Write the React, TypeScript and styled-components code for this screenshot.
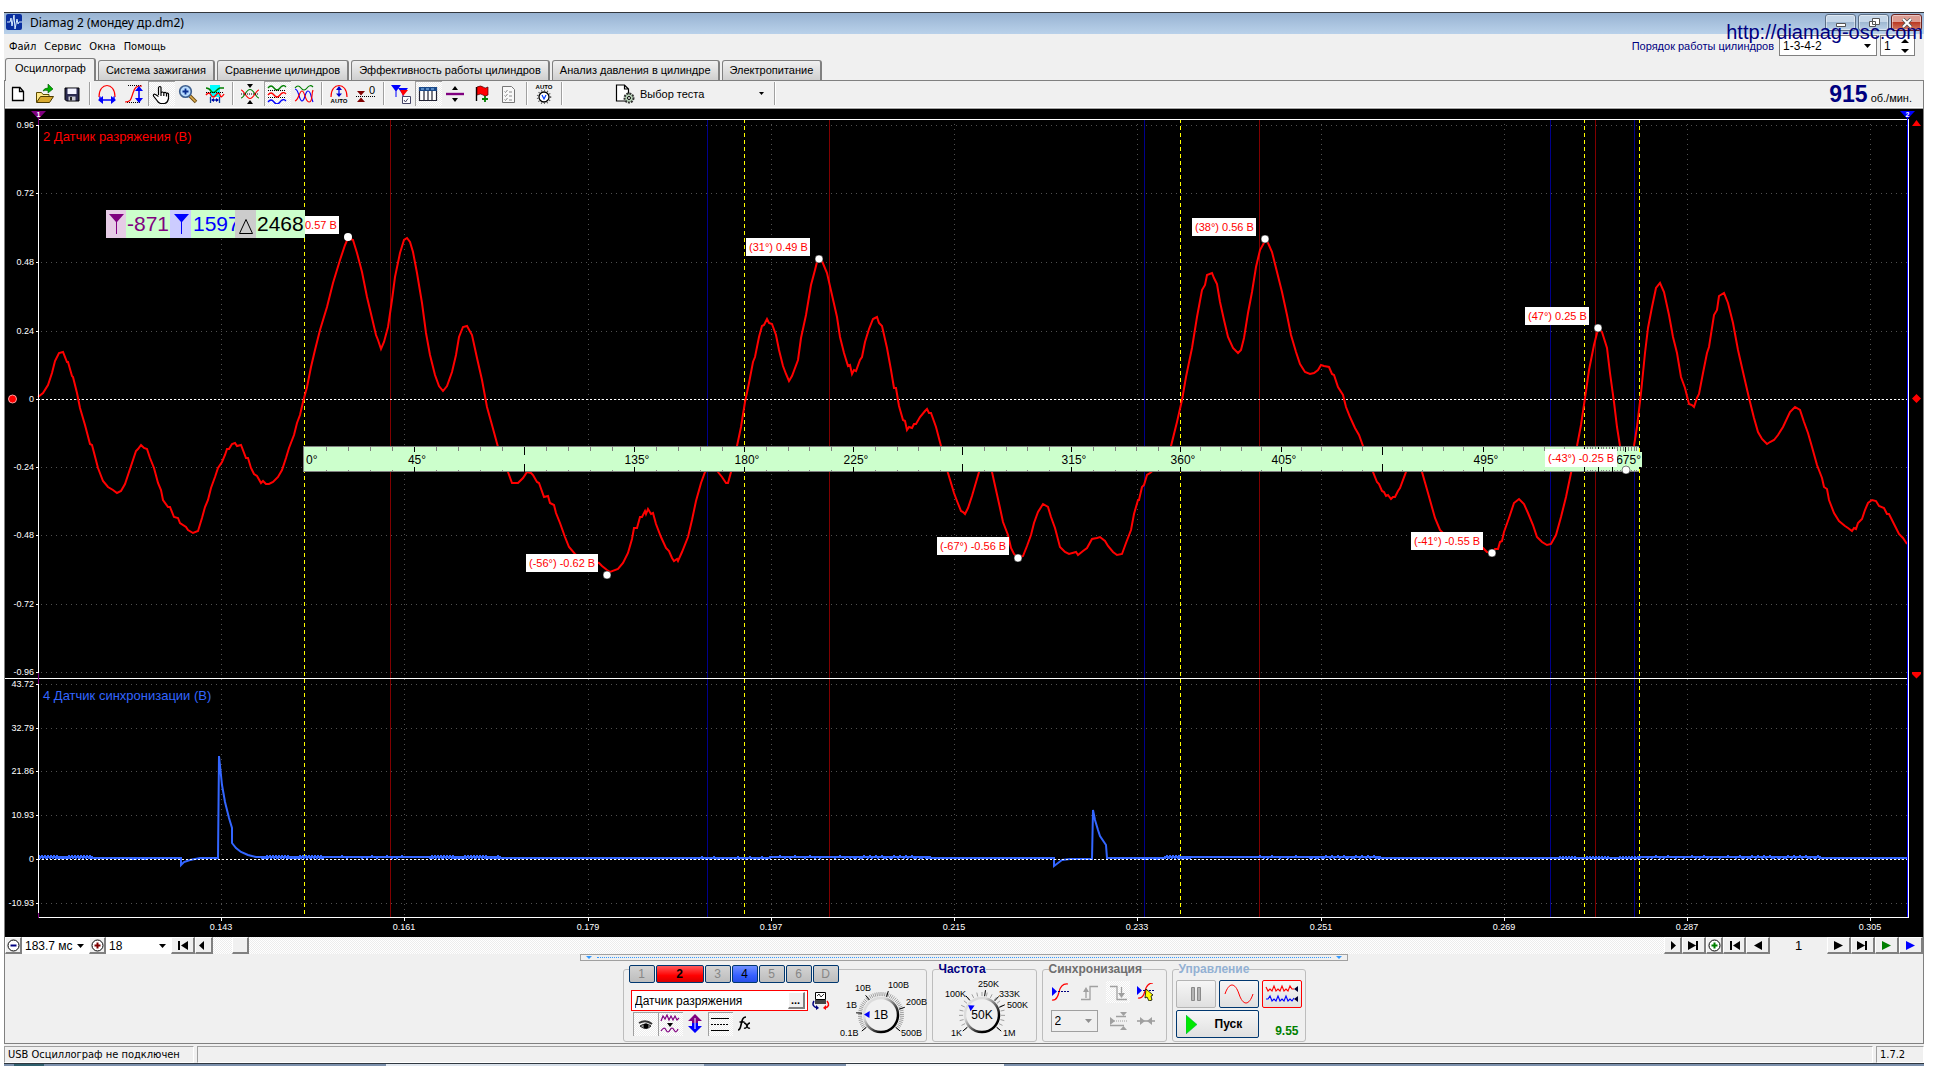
import React from "react";
import styled, { createGlobalStyle, css } from "styled-components";

const FACE = "#f0f0f0";
const UI = `"Liberation Sans", Arial, sans-serif`;
const TAHOMA = `"DejaVu Sans Condensed", Tahoma, sans-serif`;

const Global = createGlobalStyle`
  *, *::before, *::after { box-sizing: border-box; }
  body { margin: 0; background: #fff; color: #000; font: 11px/14px ${UI}; }
  button, input, select { font: inherit; color: inherit; margin: 0; padding: 0; border: 0; border-radius: 0; background: none; }
  svg { display: block; flex: none; }
`;

/* ---------- window frame ---------- */

const Desktop = styled.div`
  padding: 12px 12px 0 4px;
`;

const Window = styled.div`
  position: relative;
  display: flex;
  flex-direction: column;
  background: ${FACE};
`;

const TitleBar = styled.header`
  display: flex;
  align-items: flex-start;
  gap: 8px;
  height: 22px;
  padding: 1px 2px;
  border-top: 1px solid #33373d;
  background: linear-gradient(#98b3d2, #b9d1ea);
`;

const Title = styled.h1`
  flex: 1;
  margin: 0;
  font: 12px/18px "Noto Sans", "Open Sans", sans-serif;
`;

const WindowButtons = styled.div`
  display: flex;
  gap: 2px;
`;

const WindowButton = styled.button<{ $close?: boolean }>`
  display: grid;
  place-items: center;
  width: 31px;
  height: 17px;
  border: 1px solid #5c6f86;
  border-radius: 3px;
  box-shadow: inset 0 0 0 1px rgba(255, 255, 255, 0.45);
  background: linear-gradient(#c5d6e8 45%, #9fb8d2 50%, #bcd2e8);
  ${(p) => p.$close && css`border-color: #6b2320; background: linear-gradient(#dd9c92 45%, #bb3a24 50%, #d27a64);`}
`;

const SiteLink = styled.a`
  position: absolute;
  top: 8px;
  right: 1px;
  z-index: 2;
  color: #00007f;
  font-size: 20px;
  line-height: 24px;
  text-decoration: none;
`;

const MenuBar = styled.nav`
  display: flex;
  align-items: flex-start;
  gap: 8px;
  height: 24px;
  padding: 0 9px 0 5px;
`;

const MenuItem = styled.button`
  margin-top: 6px;
  font: 11px/14px ${TAHOMA};
`;

const FiringOrder = styled.div`
  display: flex;
  gap: 3px;
  margin: 1px 0 0 auto;
  height: 21px;

  label {
    padding: 4px 2px 0 0;
    color: #00007f;
  }
`;

/* ---------- shared controls ---------- */

const Field = styled.span<{ $w: number; $line?: string }>`
  display: grid;
  width: ${(p) => p.$w}px;
  background: #fff;
  border: ${(p) => (p.$line ? `1px solid ${p.$line}` : "0")};

  > * { grid-area: 1 / 1; }
  > svg { justify-self: end; align-self: center; margin-right: 5px; pointer-events: none; }

  select, input {
    width: 100%;
    height: 100%;
    padding: 0 3px;
    appearance: none;
    outline: 0;
    font-size: 12px;
  }
  input::-webkit-inner-spin-button { appearance: none; }
`;

const dither = css`
  background: repeating-conic-gradient(#fff 0 25%, #ececec 0 50%) 0 0 / 2px 2px;
`;

/* ---------- tabs and tool bar ---------- */

const Tabs = styled.div`
  display: flex;
  align-items: flex-end;
  gap: 2px;
  height: 23px;
  padding-left: 1px;
  border-bottom: 1px solid #808080;
`;

const Tab = styled.button<{ $on?: boolean }>`
  height: 20px;
  padding: 0 7px 1px;
  border: 1px solid #808080;
  border-width: 1px 2px 0 1px;
  border-radius: 3px 3px 0 0;
  background: linear-gradient(#f0f0f0, #cfcfcf);
  white-space: nowrap;
  ${(p) => p.$on && css`height: 23px; padding: 0 8px 4px 9px; margin-bottom: -1px; background: ${FACE};`}
`;

const Frame = styled.div`
  border: 1px solid #808080;
  border-top: 0;
`;

const ToolBar = styled.div`
  display: flex;
  align-items: center;
  height: 28px;
  padding-bottom: 2px;
  border-bottom: 1px solid #a0a0a0;
  box-shadow: inset 0 -1px #fff;
`;

const Tool = styled.button<{ $down?: boolean }>`
  display: grid;
  place-items: center;
  width: 27px;
  height: 25px;
  ${(p) => p.$down && css`${dither} box-shadow: inset 1px 1px #a0a0a0;`}
`;

const ToolBarTool = styled(Tool)`
  padding-right: 2px;
`;

const Rule = styled.span`
  width: 8px;
  height: 23px;
  background: linear-gradient(90deg, transparent 3px, #a0a0a0 3px 4px, #fff 4px 5px, transparent 5px);
`;

const TestPicker = styled.button`
  display: flex;
  align-items: center;
  gap: 5px;
  width: 149px;
  margin: 0 7px 0 49px;
  text-align: left;

  span { flex: 1; }
`;

const Rpm = styled.output`
  display: flex;
  align-items: baseline;
  gap: 3px;
  margin-left: auto;
  padding-right: 11px;

  strong { color: #00007f; font-size: 23px; line-height: 24px; }
`;

/* ---------- navigation strip below the chart ---------- */

const NavStrip = styled.div`
  display: flex;
  height: 17px;
`;

const NavButton = styled.button<{ $w: number }>`
  display: grid;
  place-items: center;
  width: ${(p) => p.$w}px;
  border: 1px solid #fff;
  border-right: 2px solid #808080;
  border-bottom: 2px solid #808080;
  background: ${FACE};
`;

const Track = styled.div`
  flex: 1;
  display: flex;
  padding-left: 19px;
  ${dither}
`;

const PageNo = styled.output`
  width: 57px;
  text-align: center;
  font-size: 13px;
  line-height: 17px;
`;

/* ---------- lower control panel ---------- */

const Panel = styled.section`
  display: flex;
  flex-direction: column;
  align-items: center;
  height: 89px;
`;

const Splitter = styled.div`
  display: flex;
  align-items: center;
  gap: 5px;
  width: 40%;
  height: 7px;
  padding: 0 5px;
  border: 1px solid #a0a0a0;

  i { flex: 1; border-top: 1px dotted #3399ff; }
`;

const Groups = styled.div`
  display: flex;
  gap: 5px;
  padding-top: 8px;
`;

const Group = styled.div<{ $w: number }>`
  width: ${(p) => p.$w}px;
  height: 73px;
  padding: 0 3px;
  border: 1px solid #bdbdbd;
  border-radius: 3px;
`;

const GroupTitle = styled.h2<{ $color: string }>`
  width: max-content;
  margin: -7px 0 4px 3px;
  background: ${FACE};
  color: ${(p) => p.$color};
  font: bold 12px/13px ${UI};
`;

const ChannelGroup = styled(Group)`
  display: flex;
  justify-content: space-between;
  padding: 0 0 0 5px;
`;

const Channels = styled.div`
  display: flex;
  gap: 1px;
  margin-top: -5px;
  background: ${FACE};
`;

const Channel = styled.button<{ $tone?: "red" | "blue" }>`
  width: ${(p) => (p.$tone === "red" ? 48 : 26)}px;
  height: 18px;
  border: 1px solid #00376f;
  border-radius: 2px;
  color: ${(p) => (p.$tone ? "#000" : "#868686")};
  font-size: 12px;
  font-weight: ${(p) => (p.$tone === "red" ? "bold" : "normal")};
  line-height: 16px;
  background: ${(p) =>
    p.$tone === "red"
      ? "linear-gradient(#ff5a5a, #f00 60%, #d80000)"
      : p.$tone === "blue"
      ? "linear-gradient(#6f8fff, #3560ff 60%, #2850e8)"
      : "linear-gradient(#d4d4d4, #bdbdbd)"};
`;

const SensorRow = styled.div`
  display: flex;
  align-items: center;
  gap: 4px;
  margin: 7px 0 1px 2px;
`;

const SensorBox = styled.div`
  display: flex;
  align-items: center;
  width: 177px;
  height: 21px;
  padding: 1px 2px;
  border: 1px solid #f00;
  background: #fff;

  input { flex: 1; min-width: 0; padding-left: 1px; font-size: 12px; outline: 0; }
`;

const More = styled.button`
  width: 17px;
  height: 17px;
  border: 1px solid #fff;
  border-right: 2px solid #808080;
  border-bottom: 2px solid #808080;
  background: ${FACE};
  font-weight: bold;
  line-height: 8px;
`;

const Modes = styled.div`
  display: flex;
  margin-left: 4px;
`;

const Mode = styled(Tool)`
  width: 25px;
  height: 24px;
`;

const KnobBox = styled.div`
  position: relative;

  input {
    position: absolute;
    inset: 0;
    width: 100%;
    height: 100%;
    opacity: 0;
  }
  text { font: 9px ${UI}; }
  .value { font-size: 12px; }
`;

const FrequencyKnob = styled.div`
  margin: -10px -3px 0;
`;

const SyncGrid = styled.div`
  display: grid;
  grid-template-columns: 28px 30px 28px 28px;
  grid-template-rows: 24px 34px;
  align-items: center;
  justify-items: center;

  > span { grid-column: span 2; justify-self: start; height: 22px; margin-left: 5px; background: ${FACE}; }
`;

const SyncTool = styled(Tool)`
  width: 24px;
  height: 22px;
  ${(p) => p.$down && css`box-shadow: none;`}
`;

const RunGrid = styled.div`
  display: grid;
  grid-template-columns: repeat(3, 40px);
  grid-auto-rows: 28px;
  gap: 2px 3px;
`;

const RunButton = styled.button<{ $line: string; $wide?: boolean }>`
  display: flex;
  align-items: center;
  justify-content: center;
  grid-column: span ${(p) => (p.$wide ? 2 : 1)};
  border: 1px solid ${(p) => p.$line};
  border-radius: 2px;
  background: linear-gradient(#f6f6f6, #e0e0e0);
  font: bold 12px/14px ${UI};
  ${(p) => p.$wide && css`justify-content: flex-start; gap: 18px; padding-left: 9px;`}
`;

const Ratio = styled.output`
  align-self: end;
  justify-self: end;
  padding-right: 3px;
  color: #007f00;
  font: bold 12px/13px ${UI};
`;

/* ---------- status bar ---------- */

const StatusBar = styled.footer`
  display: flex;
  gap: 3px;
  height: 20px;
  padding-top: 2px;
  border-bottom: 1px solid #303840;
  font: 11px/15px ${TAHOMA};
`;

const StatusCell = styled.span<{ $w?: number }>`
  ${(p) => (p.$w ? `width: ${p.$w}px;` : "flex: 1;")}
  padding-left: 3px;
  border: 1px solid;
  border-color: #a0a0a0 #fff #fff #a0a0a0;
  white-space: nowrap;
`;

const TaskBar = styled.div`
  display: flex;
  height: 3px;
  background: #7b90ac;
`;

const Task = styled.i<{ $w: number; $bg?: string }>`
  width: ${(p) => p.$w}px;
  background: ${(p) => p.$bg ?? "transparent"};
`;

/* ---------- icons ---------- */

const Pic = ({ children, w = 20, h = 20 }: { children: React.ReactNode; w?: number; h?: number }) => (
  <svg width={w} height={h} viewBox={`0 0 ${w} ${h}`} fill="none" aria-hidden="true">
    {children}
  </svg>
);

const Down = () => <Pic w={7} h={4}><path d="M0 0h7L3.500 4z" fill="#000" /></Pic>;

const toolIcons: Record<string, React.ReactNode> = {
  new: <path d="M4 3.500h8l3.500 4v9H4.500v-13M11.500 3.500v4h4" fill="#fff" stroke="#000" strokeWidth="1.300" />,
  open: (
    <>
      <path d="M1.500 18V8.500h5l1.500 2h6V13" fill="#ffe98a" stroke="#5d4a00" />
      <path d="M1.500 18.500l4-6h13l-4 6z" fill="#d9a92e" stroke="#4d3c00" />
      <path d="M8 7q1-3 5-3V0l5 5-5 4V6.500q-3-.5-5 .5" fill="#00b000" stroke="#005000" strokeWidth=".6" />
    </>
  ),
  save: (
    <>
      <path d="M3 4h14v13H4.500L3 15.500z" fill="#2b2b52" stroke="#000" />
      <path d="M5.500 4.500h9v5.500h-9z" fill="#f4f4ff" />
      <path d="M6.500 12.500h7v4h-7z" fill="#c8c8d0" />
      <path d="M8 13h2v3.500H8z" fill="#222" />
    </>
  ),
  fitX: (
    <>
      <path d="M2 13C2 5 6 1.500 10 1.500S18 5 18 13" stroke="#f00" strokeWidth="1.200" />
      <path d="M3 12.500v4M17 12.500v4M5 16h10" stroke="#00f" strokeWidth="1.400" />
      <path d="M1 16l5-4v8zM19 16l-5-4v8z" fill="#00f" />
    </>
  ),
  fitY: (
    <>
      <path d="M4 1.500h13M3 18.500h13" stroke="#000" strokeDasharray="1 1" />
      <path d="M1 18c6 0 6-3 8-9s3-7 9-7" stroke="#f00" strokeWidth="1.200" />
      <path d="M15 5v11" stroke="#00f" strokeWidth="1.600" />
      <path d="M15 2l4 5h-8zM15 19l4-5h-8z" fill="#00f" />
    </>
  ),
  hand: (
    <path
      d="M7.500 11V3.500q1.500-2 2.500 0V9q1.500-2 2.800 0 1.500-1.500 2.700.5 1.500-1 2 .5v4.500q-1 4.500-4 5H9.500q-2.500-1-3.500-3L2.500 12q-.5-2.500 2-1.500l3 2M10 9v3M12.800 9.500V12M15.500 10v2.500"
      fill="#fff" stroke="#000" strokeWidth="1.200"
    />
  ),
  zoom: (
    <>
      <path d="M11 11l7 7" stroke="#6b4a10" strokeWidth="3.600" />
      <path d="M11.500 11.500l6 6" stroke="#e0b050" strokeWidth="1.600" />
      <circle cx="7.500" cy="7.500" r="5.800" fill="#b8dcff" stroke="#3d5f8e" strokeWidth="1.600" />
      <path d="M7.500 4.500v6M4.500 7.500h6" stroke="#0a2f8f" strokeWidth="1.800" />
    </>
  ),
  region: (
    <>
      <path d="M5 1h10v12H5z" fill="#0ff" />
      <path d="M1 4q3 0 5 3t5 0 4-3 4 0" stroke="#007f00" strokeWidth="1.400" />
      <path d="M1 11q3-4 5 0t5 0 4 0 4-1" stroke="#f00" strokeWidth="1.400" />
      <path d="M1 8.500h18" stroke="#000" strokeDasharray="1 1" />
      <path d="M5.500 13v6M14.500 13v6M7 16h6" stroke="#003c9f" strokeWidth="1.300" />
      <path d="M6 16l3-2v4zM14 16l-3-2v4z" fill="#00a" />
    </>
  ),
  squeeze: (
    <>
      <path d="M1 14C4 14 6 5.500 10 5.500S16 14 19 14" stroke="#007f00" strokeWidth="1.200" />
      <path d="M1 6C4 6 6 14.500 10 14.500S16 6 19 6" stroke="#f00" strokeWidth="1.200" />
      <path d="M1 10h18" stroke="#000" strokeDasharray="1 1" />
      <path d="M7 0h6l-3 4zM7 20h6l-3-4z" fill="#000" />
    </>
  ),
  stacked: (
    <>
      <path d="M1 4q3-4 6 0t6 0 6-1" stroke="#007f00" strokeWidth="1.300" />
      <path d="M1 6.500h18M1 13.500h18" stroke="#000" strokeDasharray="1 1" />
      <path d="M1 11q3-4 6 0t6 0 6-1" stroke="#f00" strokeWidth="1.300" />
      <path d="M1 18q3-4 6 0t6 0 6-1" stroke="#00f" strokeWidth="1.300" />
    </>
  ),
  overlay: (
    <>
      <path d="M1 4q3-4 6 0t6 0 6-1" stroke="#007f00" strokeWidth="1.200" />
      <path d="M1 5c4 0 4 12 7 12s3-10 6-10 3 7 5 11" stroke="#00f" strokeWidth="1.200" />
      <path d="M1 17c4-1 4-10 7-10s3 11 7 11 2-7 4-12" stroke="#f00" strokeWidth="1.200" />
    </>
  ),
  autoFit: (
    <>
      <path d="M2 13C2 5 6 1.500 10 1.500S18 5 18 13" stroke="#f00" strokeWidth="1.200" />
      <path d="M10 4v8" stroke="#00f" strokeWidth="1.300" />
      <path d="M10 2l3 4H7zM10 13l3-3.500H7z" fill="#00c" />
      <text x="10" y="19" textAnchor="middle" fontSize="6" fontWeight="bold" fill="#000">AUTO</text>
    </>
  ),
  zero: (
    <>
      <path d="M1 7h8l-4 4.500zM1 18h8l-4-4.500z" fill="#7f0000" />
      <path d="M0 12.500h20" stroke="#000" strokeDasharray="1 1" />
      <text x="13" y="10" fontSize="11" fill="#000">0</text>
    </>
  ),
  cursors: (
    <>
      <path d="M0 1h10L5.500 7v6h-1V7z" fill="#00f" />
      <path d="M7 4h10l-4.500 6v5h-1v-5z" fill="#00f" />
      <path d="M9 6h8l-5 6z" fill="#f00" />
      <path d="M11.500 12.500h8v7h-8z" fill="#fff" stroke="#446" />
      <path d="M13 16l1.500 2L17 14.500" stroke="#446" />
    </>
  ),
  table: (
    <>
      <path d="M1.500 3.500h17v13h-17z" fill="#fff" stroke="#223" strokeWidth="1.200" />
      <path d="M1 3h18v4H1z" fill="#1b4a8a" />
      <path d="M6 7v9M10 7v9M14 7v9" stroke="#223" strokeWidth="1.200" />
      <path d="M3 5h3M8 5h3M13 5h3" stroke="#9cf" />
    </>
  ),
  divider: (
    <>
      <path d="M1 10h18" stroke="#800080" strokeWidth="2.400" />
      <path d="M7 6h6l-3-4zM7 14h6l-3 4z" fill="#000" />
    </>
  ),
  flag: (
    <>
      <path d="M4.500 3v14" stroke="#000" strokeWidth="1.400" />
      <path d="M5 3q4-2 6 0t5 0v8q-3 2-5 0t-6 0z" fill="#f00" stroke="#400" strokeWidth=".7" />
      <path d="M13 12v6M10 15h6" stroke="#007f00" strokeWidth="1.800" />
    </>
  ),
  checklist: (
    <>
      <path d="M3.500 2.500h9l3 3v13h-12z" fill="#f8f8f8" stroke="#777" />
      <path d="M5.500 7.500l1 1 2-2.500M5.500 11.500l1 1 2-2.500M5.500 15.500l1 1 2-2.500M10 8h3M10 12h3M10 16h3" stroke="#8a8a8a" />
    </>
  ),
  autoV: (
    <>
      <text x="10" y="5" textAnchor="middle" fontSize="6" fontWeight="bold" fill="#000">AUTO</text>
      <circle cx="10" cy="13" r="6.500" stroke="#555" strokeWidth="1.500" strokeDasharray="1 2" />
      <circle cx="10" cy="13" r="5" fill="#fff" stroke="#000" strokeWidth="1.300" />
      <path d="M8 11l2 4 2-4" stroke="#003cff" strokeWidth="1.200" />
    </>
  ),
};

const navShapes = {
  prev: "M7 2v9L2 6.500z",
  next: "M5 2v9l5-4.500z",
  left: "M11 2v9L3 6.500z",
  right: "M2 2v9l9-4.500z",
  first: "M2 2h2v9H2zM12 2v9L5 6.500z",
  last: "M1 2v9l8-4.500zM9 2h2v9H9z",
};

const Nav = ({ shape, w, label, color = "#000" }: { shape: keyof typeof navShapes; w: number; label: string; color?: string }) => (
  <NavButton $w={w} aria-label={label}>
    <Pic w={13} h={13}><path d={navShapes[shape]} fill={color} /></Pic>
  </NavButton>
);

const ScaleButton = ({ color, plus, label }: { color: string; plus?: boolean; label: string }) => (
  <NavButton $w={17} aria-label={label}>
    <Pic w={13} h={13}>
      <circle cx="6.500" cy="6.500" r="5.500" fill="#fff" stroke="#000" />
      <path d={plus ? "M6.500 3.500v6M3.500 6.500h6" : "M3.500 6.500h6"} stroke={color} strokeWidth="2" />
    </Pic>
  </NavButton>
);

/* ---------- oscillogram ---------- */

const vacuum =
  "38,397 43,393 48,385 52,373 55,361 59,353 63,352 67,362 68,362 72,376 73,377 77,393 80,408 85,425 90,444 92,445 98,468 103,481 108,487 113,490 117,493 121,491 125,484 129,472 133,460 136,451 138,449 141,445 144,448 147,449 150,458 154,468 158,483 161,490 163,500 168,507 170,507 174,517 178,518 180,523 186,527 188,530 193,533 198,531 202,518 205,507 208,500 211,488 215,477 218,468 222,462 225,455 227,449 229,449 232,444 235,443 237,446 241,445 246,458 248,458 251,468 254,474 257,476 261,483 263,481 266,484 269,484 273,482 278,477 282,470 286,458 289,448 294,435 297,423 300,415 303,402 307,387 311,367 315,350 320,330 327,307 333,283 340,260 345,245 348,238 353,240 357,253 362,272 367,297 372,318 376,335 378,340 381,349 384,342 388,327 392,300 395,277 400,253 404,240 407,238 410,242 413,252 417,273 422,303 426,333 430,355 435,375 439,386 443,391 447,386 452,372 456,355 459,337 463,327 467,326 472,335 477,358 482,380 487,407 492,425 498,447 508,472 512,483 518,483 523,478 527,472 531,473 533,475 537,482 539,483 544,497 548,496 550,503 554,505 556,513 560,523 565,537 569,547 575,554 585,560 599,563 602,566 607,570 610,572 618,569 623,563 628,553 632,539 634,528 637,528 640,517 642,517 645,511 646,514 648,509 651,514 653,513 656,524 661,537 666,548 669,551 672,558 674,561 677,559 678,561 682,552 688,537 692,520 696,501 701,483 705,472 712,464 718,472 722,477 726,483 728,483 731,472 737,446 741,427 745,402 749,383 753,362 755,357 759,337 762,326 764,325 767,319 769,323 772,324 776,335 779,350 783,366 786,374 789,381 792,376 798,360 801,338 806,315 811,285 815,270 817,262 819,259 822,261 827,273 832,295 837,317 840,337 844,353 848,366 850,365 852,374 854,370 856,371 860,360 862,357 865,342 869,329 873,319 875,318 877,317 879,323 882,326 887,348 891,370 894,388 896,388 899,406 903,420 905,421 907,430 909,427 912,428 914,424 916,424 920,417 925,411 927,409 929,413 931,413 936,427 941,446 948,473 954,493 957,501 961,511 963,512 965,514 968,508 972,496 979,472 985,458 992,472 996,490 1000,508 1003,522 1008,535 1011,548 1014,554 1018,558 1023,556 1027,546 1031,535 1034,523 1038,512 1043,504 1048,507 1051,517 1055,528 1060,547 1065,552 1069,554 1076,552 1078,555 1083,551 1087,548 1092,539 1097,538 1100,537 1105,541 1108,546 1113,552 1117,555 1122,554 1126,543 1131,530 1134,514 1138,500 1139,500 1142,487 1144,485 1147,475 1150,473 1160,465 1171,446 1177,422 1182,400 1186,377 1192,348 1197,317 1202,290 1205,285 1207,275 1212,273 1214,278 1217,284 1220,302 1224,320 1228,337 1233,348 1238,353 1241,350 1244,338 1248,313 1252,292 1256,267 1260,250 1265,241 1268,243 1272,252 1277,272 1282,292 1287,315 1291,335 1296,352 1300,364 1305,372 1310,374 1314,373 1318,370 1321,365 1324,366 1329,367 1332,374 1334,375 1338,387 1343,395 1346,407 1350,417 1355,428 1359,435 1363,446 1373,472 1377,482 1379,484 1382,491 1384,492 1386,496 1388,495 1391,499 1393,497 1395,497 1398,491 1400,488 1406,472 1414,460 1422,472 1428,493 1435,518 1440,530 1450,540 1483,548 1487,552 1492,553 1495,549 1498,549 1500,542 1502,541 1504,532 1509,518 1514,503 1519,499 1524,504 1528,513 1533,525 1537,537 1542,542 1547,545 1551,544 1556,535 1561,517 1566,497 1571,473 1577,446 1581,425 1585,398 1589,370 1594,345 1597,333 1599,329 1602,332 1607,348 1610,373 1614,402 1617,427 1620,446 1626,470 1634,446 1637,427 1641,393 1645,353 1648,328 1652,307 1656,288 1660,283 1664,292 1669,315 1673,337 1677,353 1681,377 1685,388 1689,404 1692,405 1694,407 1697,398 1699,394 1703,373 1707,353 1709,347 1714,315 1717,310 1719,296 1724,293 1728,303 1733,323 1738,350 1743,372 1749,398 1754,418 1758,432 1762,439 1767,444 1770,442 1774,440 1778,435 1783,427 1790,412 1795,407 1800,410 1804,422 1808,433 1812,447 1817,465 1822,478 1824,487 1827,489 1829,500 1834,513 1839,521 1845,526 1848,528 1852,531 1854,528 1856,529 1858,523 1862,519 1865,510 1868,503 1872,500 1876,501 1879,506 1884,508 1887,514 1889,514 1894,524 1899,534 1903,538 1907,544";

/** Flat stretch of the sync signal; `step` is the spacing of the noise ticks, 0 for none. */
const flat = (from: number, to: number, y: number, step = 0) => {
  let d = ` L${from} ${y}`;
  if (step) {
    for (let x = from; x < to; x += step) {
      if ((x * 7) % 11 < 3) continue;
      d += ` L${x} ${y} L${x} ${y + (x % 3 ? 2 : -2)} L${x} ${y}`;
    }
  }
  return `${d} L${to} ${y}`;
};

const sync =
  "M38 857" +
  flat(38, 92, 857, 1) + flat(92, 130, 858) + flat(130, 152, 858, 3) + flat(152, 181, 858) +
  " L181 865 L184 862 L190 860 L200 858 L218 858 L219 756 L222 785 L225 802 L229 818 L232 828 L232 843 L236 848 L241 852 L248 855 L256 857" +
  flat(262, 325, 857, 1) + flat(325, 342, 857) + flat(342, 416, 857, 5) + flat(430, 500, 857, 1) +
  flat(500, 690, 858) + flat(690, 770, 858, 4) + flat(770, 850, 857, 5) + flat(850, 930, 857, 2) + flat(930, 1054, 858) +
  " L1054 866 L1058 863 L1062 860 L1070 859 L1092 859 L1093 810 L1095 820 L1098 830 L1100 836 L1106 845 L1107 858" +
  flat(1110, 1145, 858) + flat(1145, 1165, 858, 3) + flat(1165, 1191, 857, 1) + flat(1191, 1260, 857) +
  flat(1260, 1300, 857, 4) + flat(1310, 1380, 857, 2) + flat(1380, 1560, 858) +
  flat(1560, 1640, 858, 3) + flat(1640, 1740, 857, 4) + flat(1740, 1820, 857, 2) + flat(1820, 1907, 858);

const voltsTop: [string, number][] = [
  ["0.96", 125], ["0.72", 193], ["0.48", 262], ["0.24", 331], ["0", 399],
  ["-0.24", 467], ["-0.48", 535], ["-0.72", 604], ["-0.96", 672],
];
const voltsBottom: [string, number][] = [
  ["43.72", 684], ["32.79", 728], ["21.86", 771], ["10.93", 815], ["0", 859], ["-10.93", 903],
];
const times: [string, number][] = [
  ["0.143", 221], ["0.161", 404], ["0.179", 588], ["0.197", 771], ["0.215", 954],
  ["0.233", 1137], ["0.251", 1321], ["0.269", 1504], ["0.287", 1687], ["0.305", 1870],
];
const cycles = [304, 744, 1180, 1584, 1639];
const redLines = [390, 829, 1259, 1595];
const blueLines = [707, 1144, 1550, 1634];
const angleLabels = [45, 135, 180, 225, 315, 360, 405, 495];

const peaks = [
  { text: "(31°) 0.49 В", x: 746, y: 238, w: 64, dot: [819, 259] },
  { text: "(38°) 0.56 В", x: 1192, y: 218, w: 64, dot: [1265, 239] },
  { text: "(47°) 0.25 В", x: 1525, y: 307, w: 64, dot: [1598, 328] },
  { text: "(-43°) -0.25 В", x: 1545, y: 449, w: 72, dot: [1626, 470] },
  { text: "(-41°) -0.55 В", x: 1411, y: 532, w: 72, dot: [1492, 553] },
  { text: "(-56°) -0.62 В", x: 526, y: 554, w: 72, dot: [607, 575] },
  { text: "(-67°) -0.56 В", x: 937, y: 537, w: 72, dot: [1018, 558] },
];

const angleX = (deg: number) => {
  const i = Math.min(Math.floor(deg / 180), cycles.length - 2);
  return cycles[i] + ((deg - i * 180) / 180) * (cycles[i + 1] - cycles[i]);
};

const Chart = styled.svg`
  width: 100%;
  height: auto;
  background: #000;

  text { font-family: ${UI}; }
  .scale text { font-size: 9px; fill: #fff; }
  .grid { stroke: #505050; stroke-dasharray: 1 4; shape-rendering: crispEdges; }
  .axis { stroke: #fff; shape-rendering: crispEdges; }
  .zero { stroke: #fff; stroke-dasharray: 2 2; shape-rendering: crispEdges; }
  .channel { font-size: 13px; }
  .mark { font-size: 11px; fill: #f00; }
  .angle { font-size: 12px; fill: #000; }
`;

const Ruler = () => (
  <g shapeRendering="crispEdges">
    <rect x="303" y="446" width="1336" height="26" fill="#ccffcc" />
    <path d="M303.500 446.500H1639M303.500 471.500H1639M303.500 446V472" stroke="#808080" />
    {Array.from({ length: 79 }, (_, i) => (i + 1) * 9).map((deg) => {
      const x = Math.round(angleX(deg)) + 0.5;
      const major = deg % 45 === 0;
      const long = deg % 90 === 0 && deg % 180 !== 0;
      const top = long ? 8 : major ? 5 : 4;
      const bottom = long ? 8 : major ? 5 : 2;
      return <path key={deg} d={`M${x} 447v${top}M${x} 472v-${bottom}`} stroke={major ? "#000" : "#808080"} />;
    })}
    <text className="angle" x="306" y="464">0°</text>
    {angleLabels.map((deg) => (
      <text key={deg} className="angle" x={angleX(deg) + 3} y="464" textAnchor="middle">{deg}°</text>
    ))}
    <rect x="1616" y="452" width="26" height="15" fill="#ccffcc" />
    <text className="angle" x="1641" y="464" textAnchor="end">675°</text>
  </g>
);

const Oscillogram = () => (
  <Chart viewBox="5 109 1918 828" role="img" aria-label="Осциллограмма">
    {[...voltsTop, ...voltsBottom].map(([, y]) => <path key={y} className="grid" d={`M41 ${y}.500H1907`} />)}
    {times.map(([, x]) => <path key={x} className="grid" d={`M${x}.500 124V917`} />)}
    {redLines.map((x) => <path key={x} d={`M${x}.500 119V917`} stroke="#800000" shapeRendering="crispEdges" />)}
    {blueLines.map((x) => <path key={x} d={`M${x}.500 119V917`} stroke="#00008b" shapeRendering="crispEdges" />)}
    <path className="zero" d="M38 399.500H1907" />
    {cycles.map((x) => <path key={x} d={`M${x}.500 119V917`} stroke="#ff0" strokeDasharray="4 3" shapeRendering="crispEdges" />)}

    <polyline points={vacuum} fill="none" stroke="#f00" strokeWidth="2" />
    <path d={sync} fill="none" stroke="#3366ff" strokeWidth="2" />
    <path className="zero" d="M38 859.500H1907" />

    <path className="axis" d="M38.500 119V917M38 119.500H1909M5 678.500H1907M38 917.500H1909M1908.500 119V918" />
    <path d="M1907.500 112V917" stroke="#0000ff" shapeRendering="crispEdges" />
    <path d="M38.500 117V126M38.500 672V684M38.500 913V918" stroke="#800080" shapeRendering="crispEdges" />

    <g className="scale">
      {[...voltsTop, ...voltsBottom].map(([label, y]) => (
        <g key={y}>
          <path className="axis" d={`M36 ${y}.500h3`} />
          <text x="34" y={y + 3} textAnchor="end">{label}</text>
        </g>
      ))}
      {times.map(([label, x]) => (
        <g key={x}>
          <path className="axis" d={`M${x}.500 918v3`} />
          <text x={x} y="930" textAnchor="middle">{label}</text>
        </g>
      ))}
    </g>

    <text className="channel" x="43" y="141" fill="#f00">2 Датчик разряжения (В)</text>
    <text className="channel" x="43" y="700" fill="#3366ff">4 Датчик синхронизации (В)</text>

    <Ruler />

    <path d="M31 111h15l-7.500 8z" fill="#800080" />
    <text x="38.500" y="117" textAnchor="middle" fontSize="7" fontWeight="bold" fill="#fff">1</text>
    <path d="M1900 111h15l-7.500 8z" fill="#0000ff" />
    <text x="1907.500" y="117" textAnchor="middle" fontSize="7" fontWeight="bold" fill="#fff">2</text>
    <circle cx="12.500" cy="399" r="4" fill="#f00" stroke="#ff9c9c" />
    <path d="M1912 126h9l-4.500-6zM1916.500 394l4.500 4.500-4.500 4.500-4.500-4.500zM1912 672h9v2l-4.500 4.500-4.500-4.500z" fill="#f00" />

    <rect x="305" y="216" width="34" height="18" fill="#fff" />
    <text className="mark" x="305" y="229">0.57 В</text>
    <circle cx="348" cy="237" r="4" fill="#fff" />
    {peaks.map((p) => (
      <g key={p.text}>
        <rect x={p.x} y={p.y} width={p.w} height="18" fill="#fff" />
        <text className="mark" x={p.x + 3} y={p.y + 13}>{p.text}</text>
        <circle cx={p.dot[0]} cy={p.dot[1]} r="4" fill="#fff" stroke="#000" strokeWidth=".5" />
      </g>
    ))}

    <g fontSize="21">
      <rect x="106" y="210" width="199" height="28" fill="#ccffcc" />
      <text x="127" y="231" fill="#800080">-871</text>
      <text x="193" y="231" fill="#0000ff">1597</text>
      <rect x="106" y="210" width="20" height="28" fill="#e6cce6" />
      <rect x="170" y="210" width="21" height="28" fill="#ccccff" />
      <rect x="235" y="210" width="21" height="28" fill="#cccccc" />
      <path d="M109 214h15l-7 8v12h-1v-12z" fill="#800080" />
      <path d="M174 214h15l-7 8v12h-1v-12z" fill="#0000ff" />
      <path d="M239.500 233.500h13L246 219.500z" fill="none" stroke="#000" />
      <text x="257" y="231" fill="#000">2468</text>
    </g>
  </Chart>
);

/* ---------- rotary knob ---------- */

type KnobProps = {
  name: string;
  value: string;
  w: number;
  cx: number;
  labels: [string, number, number][];
  stops: number[];
  count: number;
  pointer: number;
};

const Knob = ({ name, value, w, cx, labels, stops, count, pointer }: KnobProps) => {
  const cy = 45;
  const at = (deg: number, r: number) => {
    const a = ((deg - 90) * Math.PI) / 180;
    return `${(cx + r * Math.cos(a)).toFixed(1)} ${(cy + r * Math.sin(a)).toFixed(1)}`;
  };
  const id = `knob-${w}`;
  return (
    <KnobBox>
      <svg width={w} height="71" viewBox={`0 0 ${w} 71`} aria-hidden="true">
        <defs>
          <linearGradient id={id} x1="0" y1="0" x2="1" y2="1">
            <stop offset=".3" stopColor="#dcdcdc" />
            <stop offset=".75" stopColor="#000" />
          </linearGradient>
        </defs>
        {Array.from({ length: count + 1 }, (_, i) => -130 + (260 * i) / count).map((deg) => (
          <path key={deg} d={`M${at(deg, 19)}L${at(deg, 23)}`} stroke="#a0a0a0" />
        ))}
        {stops.map((deg) => <path key={deg} d={`M${at(deg, 19)}L${at(deg, 25)}`} stroke="#000" />)}
        <circle cx={cx} cy={cy} r="17" fill="#f0f0f0" stroke={`url(#${id})`} strokeWidth="2.500" />
        <path d={`M${at(pointer, 17)}L${at(pointer + 17, 12)}L${at(pointer - 17, 12)}z`} fill="#00f" />
        {labels.map(([t, x, y]) => <text key={t} x={x} y={y}>{t}</text>)}
        <text className="value" x={cx} y={cy + 4} textAnchor="middle">{value}</text>
      </svg>
      <input type="range" min="0" max={labels.length} aria-label={name} />
    </KnobBox>
  );
};

/* ---------- page ---------- */

const toolSets: { id: string; label: string; down?: boolean }[][] = [
  [{ id: "new", label: "Новый" }, { id: "open", label: "Открыть" }, { id: "save", label: "Сохранить" }],
  [
    { id: "fitX", label: "Масштаб по времени" }, { id: "fitY", label: "Масштаб по амплитуде" },
    { id: "hand", label: "Перемещение", down: true }, { id: "zoom", label: "Лупа" }, { id: "region", label: "Область" },
  ],
  [{ id: "squeeze", label: "Сжать" }, { id: "stacked", label: "Раздельно", down: true }, { id: "overlay", label: "Совместно" }],
  [{ id: "autoFit", label: "Автомасштаб" }, { id: "zero", label: "Установить ноль" }],
  [
    { id: "cursors", label: "Маркеры" }, { id: "table", label: "Таблица", down: true }, { id: "divider", label: "Разделитель" },
    { id: "flag", label: "Добавить метку" }, { id: "checklist", label: "Список" },
  ],
  [{ id: "autoV", label: "Автонастройка" }],
];

const tabNames = [
  "Осциллограф", "Система зажигания", "Сравнение цилиндров",
  "Эффективность работы цилиндров", "Анализ давления в цилиндре", "Электропитание",
];

export default function App() {
  return (
    <Desktop>
      <Global />
      <Window>
        <TitleBar>
          <Pic w={16} h={16}>
            <rect width="16" height="16" rx="2" fill="#0a2f9f" />
            <path d="M1 8h3l1-4 1 8 2-11 1 14 2-10 1 5 1-2h3" stroke="#d8ecff" />
          </Pic>
          <Title>Diamag 2 (мондеу др.dm2)</Title>
          <WindowButtons>
            <WindowButton aria-label="Свернуть"><Pic w={12} h={10}><path d="M1.500 5.500h9v3h-9z" fill="#fff" stroke="#555" /></Pic></WindowButton>
            <WindowButton aria-label="Восстановить">
              <Pic w={12} h={11}><path d="M4.500 1.500h7v6h-7zM1.500 4.500h6v5h-6z" fill="#fff" stroke="#555" /></Pic>
            </WindowButton>
            <WindowButton $close aria-label="Закрыть">
              <Pic w={12} h={10}><path d="M2 1l8 8M10 1L2 9" stroke="#555" strokeWidth="3.600" /><path d="M2 1l8 8M10 1L2 9" stroke="#fff" strokeWidth="2" /></Pic>
            </WindowButton>
          </WindowButtons>
        </TitleBar>
        <SiteLink href="http://diamag-osc.com">http://diamag-osc.com</SiteLink>

        <MenuBar>
          {["Файл", "Сервис", "Окна", "Помощь"].map((m) => <MenuItem key={m}>{m}</MenuItem>)}
          <FiringOrder>
            <label htmlFor="order">Порядок работы цилиндров</label>
            <Field $w={98} $line="#808080">
              <select id="order"><option>1-3-4-2</option></select>
              <Down />
            </Field>
            <Field $w={35} $line="#808080">
              <input type="number" defaultValue="1" aria-label="Номер цилиндра" />
              <Pic w={8} h={14}><path d="M0 4h8L4 0zM0 10h8l-4 4z" fill="#000" /></Pic>
            </Field>
          </FiringOrder>
        </MenuBar>

        <Tabs role="tablist">
          {tabNames.map((t, i) => <Tab key={t} role="tab" aria-selected={i === 0} $on={i === 0}>{t}</Tab>)}
        </Tabs>

        <Frame>
          <ToolBar role="toolbar">
            {toolSets.map((set, i) => (
              <React.Fragment key={i}>
                {set.map((t) => (
                  <ToolBarTool key={t.id} $down={t.down} aria-label={t.label}><Pic>{toolIcons[t.id]}</Pic></ToolBarTool>
                ))}
                <Rule />
              </React.Fragment>
            ))}
            <TestPicker>
              <Pic>
                <path d="M1.500 1h8l4 4v12h-12zM9.500 1v4h4" fill="#fff" stroke="#000" strokeWidth="1.200" />
                <circle cx="14" cy="14" r="4.500" fill="#b8d4b8" stroke="#333" strokeWidth="2" strokeDasharray="2 1" />
                <circle cx="14" cy="14" r="1.500" fill="#fff" stroke="#000" />
              </Pic>
              <span>Выбор теста</span>
              <Pic w={5} h={3}><path d="M0 0h5L2.500 3z" fill="#000" /></Pic>
            </TestPicker>
            <Rule />
            <Rpm><strong>915</strong>об./мин.</Rpm>
          </ToolBar>

          <Oscillogram />

          <NavStrip>
            <ScaleButton color="#00007f" label="Уменьшить" />
            <Field $w={67}>
              <select aria-label="Время на экране"><option>183.7 мс</option></select>
              <Down />
            </Field>
            <ScaleButton color="#7f0000" plus label="Увеличить" />
            <Field $w={65}>
              <select aria-label="Шаг"><option>18</option></select>
              <Down />
            </Field>
            <Nav shape="first" w={24} label="В начало" />
            <Nav shape="prev" w={18} label="Назад" />
            <Track><NavButton $w={17} aria-label="Положение" /></Track>
            <Nav shape="next" w={18} label="Вперёд" />
            <Nav shape="last" w={24} label="В конец" />
            <ScaleButton color="#007f00" plus label="Добавить кадр" />
            <Nav shape="first" w={23} label="Первый кадр" />
            <Nav shape="left" w={24} label="Предыдущий кадр" />
            <PageNo>1</PageNo>
            <Nav shape="right" w={24} label="Следующий кадр" />
            <Nav shape="last" w={24} label="Последний кадр" />
            <Nav shape="right" w={24} color="#007f00" label="Воспроизвести" />
            <Nav shape="right" w={24} color="#0000ff" label="Воспроизвести все" />
          </NavStrip>

          <Panel>
            <Splitter>
              <Pic w={6} h={3}><path d="M0 0h6L3 3z" fill="#3399ff" /></Pic>
              <i />
              <Pic w={6} h={3}><path d="M0 0h6L3 3z" fill="#3399ff" /></Pic>
            </Splitter>
            <Groups>
              <ChannelGroup $w={304}>
                <div>
                  <Channels>
                    <Channel>1</Channel>
                    <Channel $tone="red">2</Channel>
                    <Channel>3</Channel>
                    <Channel $tone="blue">4</Channel>
                    <Channel>5</Channel>
                    <Channel>6</Channel>
                    <Channel>D</Channel>
                  </Channels>
                  <SensorRow>
                    <SensorBox>
                      <input defaultValue="Датчик разряжения" aria-label="Датчик" />
                      <More aria-label="Выбрать датчик">...</More>
                    </SensorBox>
                    <Pic w={18}>
                      <path d="M3.500 1.500h10v7h-10z" fill="#fff" stroke="#000" />
                      <path d="M3 9h11v4H3z" fill="#444" />
                      <path d="M5 5l2-2 2 3 3-3" stroke="#000" strokeWidth=".8" />
                      <path d="M2 10q-3 5 3 7" stroke="#00007f" strokeWidth="1.500" />
                      <path d="M4 14v5l3-2z" fill="#00007f" />
                      <path d="M15 10q4 5-2 7" stroke="#f00" strokeWidth="1.500" />
                      <path d="M14 14v5l-3-2z" fill="#f00" />
                    </Pic>
                  </SensorRow>
                  <Modes>
                    <Mode $down aria-label="Показать">
                      <Pic>
                        <path d="M4 9q7-4 13 1" stroke="#333" strokeWidth="2" />
                        <path d="M5 12q6-4 11 0-5 5-11 0" fill="#999" stroke="#222" />
                        <circle cx="11" cy="12" r="2.500" fill="#000" />
                      </Pic>
                    </Mode>
                    <Mode $down aria-label="Фильтр">
                      <Pic>
                        <path d="M1 7l2-5 2 3 2-4 2 5 2-4 2 4 2-4 2 4 2-2M1 17q3-5 5-1t4 0 4 0 4-1" stroke="#800080" strokeWidth="1.200" />
                        <path d="M7 9h6l-3 4z" fill="#000" />
                      </Pic>
                    </Mode>
                    <Mode aria-label="Инвертировать">
                      <Pic>
                        <path d="M10 0l7 7h-4v4H7V7H3z" fill="#800080" />
                        <path d="M10 19l7-7h-4V9H7v3H3z" fill="#0000ff" />
                        <path d="M10 4v11" stroke="#fff" />
                      </Pic>
                    </Mode>
                    <Mode $down aria-label="Линии уровня">
                      <Pic><path d="M1 4.500h18M1 16.500h18" stroke="#000" /><path d="M1 10.500h18" stroke="#000" strokeDasharray="2 1" /></Pic>
                    </Mode>
                    <Mode aria-label="Функция">
                      <Pic>
                        <path d="M3 16q2 0 3-5l1-4q1-4 4-4M4.500 8h5" stroke="#000" strokeWidth="1.600" />
                        <path d="M9 9q2 0 3 3t3 2M15 9q-2 0-3 3t-3 2" stroke="#000" strokeWidth="1.300" />
                      </Pic>
                    </Mode>
                  </Modes>
                </div>
                <Knob
                  name="Диапазон" value="1В" w={92} cx={42} count={50} pointer={-88} stops={[-130, -85, -38, 17, 72, 130]}
                  labels={[["10В", 16, 21], ["100В", 49, 18], ["200В", 67, 35], ["500В", 62, 66], ["1В", 7, 38], ["0.1В", 1, 66]]}
                />
              </ChannelGroup>

              <Group $w={105}>
                <GroupTitle $color="#00007f">Частота</GroupTitle>
                <FrequencyKnob>
                  <Knob
                    name="Частота дискретизации" value="50K" w={103} cx={49} count={20} pointer={-55} stops={[-130, -40, 8, 42, 66, 130]}
                    labels={[["250K", 45, 17], ["100K", 12, 27], ["333K", 66, 27], ["500K", 74, 38], ["1K", 18, 66], ["1M", 70, 66]]}
                  />
                </FrequencyKnob>
              </Group>

              <Group $w={125}>
                <GroupTitle $color="#6e6e6e">Синхронизация</GroupTitle>
                <SyncGrid>
                  <SyncTool aria-label="Уровень">
                    <Pic w={18} h={18}>
                      <path d="M1 17q5 1 7-8t9-8" stroke="#f00" strokeWidth="1.200" />
                      <path d="M7 8.500h11" stroke="#00007f" strokeDasharray="2 1" />
                      <path d="M1 4v9l5-4.500z" fill="#00f" />
                    </Pic>
                  </SyncTool>
                  <SyncTool aria-label="По фронту">
                    <Pic w={18} h={18}><path d="M1 16.500h9v-13h8M6 15V8" stroke="#a0a0a0" strokeWidth="1.300" /><path d="M3 9h6L6 4z" fill="#a0a0a0" /></Pic>
                  </SyncTool>
                  <SyncTool $down aria-label="По спаду">
                    <Pic w={18} h={18}><path d="M1 3.500h7v13h10M12.500 4v7" stroke="#a0a0a0" strokeWidth="1.300" /><path d="M9 10h7l-3.500 5z" fill="#a0a0a0" /></Pic>
                  </SyncTool>
                  <SyncTool aria-label="Выбор уровня">
                    <Pic w={18} h={18}>
                      <path d="M1 15q5 1 7-7t8-8" stroke="#f00" strokeWidth="1.200" />
                      <path d="M6 7.500h12" stroke="#00007f" strokeDasharray="2 1" />
                      <path d="M0 3v9l5-4.500z" fill="#00f" />
                      <path d="M9 6l7 6-2 1 1 4-3 1-2-4-2 1z" fill="#ff0" stroke="#000" strokeWidth=".8" />
                    </Pic>
                  </SyncTool>
                  <Field $w={47} $line="#a0a0a0">
                    <select aria-label="Канал синхронизации"><option>2</option></select>
                    <Pic w={7} h={4}><path d="M0 0h7L3.500 4z" fill="#909090" /></Pic>
                  </Field>
                  <SyncTool aria-label="Смещение">
                    <Pic w={18} h={18}>
                      <path d="M1 13.500h14M7 4.500h10" stroke="#a0a0a0" strokeWidth="1.400" />
                      <path d="M5 9h13" stroke="#a0a0a0" strokeDasharray="1 1" />
                      <path d="M1 5v8l5-4zM11 0h7l-3.500 4zM11 18h7l-3.500-4z" fill="#a0a0a0" />
                    </Pic>
                  </SyncTool>
                  <SyncTool aria-label="Центрировать">
                    <Pic w={18} h={18}><path d="M0 9h18" stroke="#a0a0a0" strokeWidth="1.600" /><path d="M3 5v8l5-4zM15 5v8l-5-4z" fill="#a0a0a0" /></Pic>
                  </SyncTool>
                </SyncGrid>
              </Group>

              <Group $w={134}>
                <GroupTitle $color="#93b0d3">Управление</GroupTitle>
                <RunGrid>
                  <RunButton $line="#b4b4b4" aria-label="Пауза">
                    <Pic w={12} h={16}><path d="M1.500 1.500h3v13h-3zM7.500 1.500h3v13h-3z" fill="#b4b4b4" stroke="#8a8a8a" /></Pic>
                  </RunButton>
                  <RunButton $line="#00376f" aria-label="Один канал">
                    <Pic w={30} h={20}><path d="M1 10C5-2 11-2 15 10s10 12 14 0" stroke="#f00" /></Pic>
                  </RunButton>
                  <RunButton $line="#f00" aria-label="Все каналы">
                    <Pic w={34} h={20}>
                      <path d="M1 3l2 4 2-2 2 2 2-5 2 5 2-2 2 2 2-5 2 5 2-2 2 2 2-5 2 3h2" stroke="#f00" strokeWidth="1.100" />
                      <path d="M1 15h2l2-3 2 5 2-2 2 2 2-5 2 5 2-2 2 2 2-5 2 5 2-2 2 2 2-3" stroke="#00f" strokeWidth="1.100" />
                      <path d="M33 2v6l-4-3zM33 12v6l-4-3z" fill="#003" />
                    </Pic>
                  </RunButton>
                  <RunButton $line="#00376f" $wide>
                    <Pic w={11} h={19}><path d="M0 0v19l11-9.500z" fill="#00e800" stroke="#0a5" strokeWidth=".5" /></Pic>
                    Пуск
                  </RunButton>
                  <Ratio>9.55</Ratio>
                </RunGrid>
              </Group>
            </Groups>
          </Panel>
        </Frame>

        <StatusBar>
          <StatusCell $w={190}>USB Осциллограф не подключен</StatusCell>
          <StatusCell />
          <StatusCell $w={48}>1.7.2</StatusCell>
        </StatusBar>
        <TaskBar>
          <Task $w={10} />
          <Task $w={30} $bg="#2f5f6d" />
          <Task $w={342} />
          <Task $w={318} $bg="linear-gradient(90deg, #e4eaf1, #c3d0de)" />
          <Task $w={142} />
          <Task $w={158} $bg="#f2f5f8" />
        </TaskBar>
      </Window>
    </Desktop>
  );
}
